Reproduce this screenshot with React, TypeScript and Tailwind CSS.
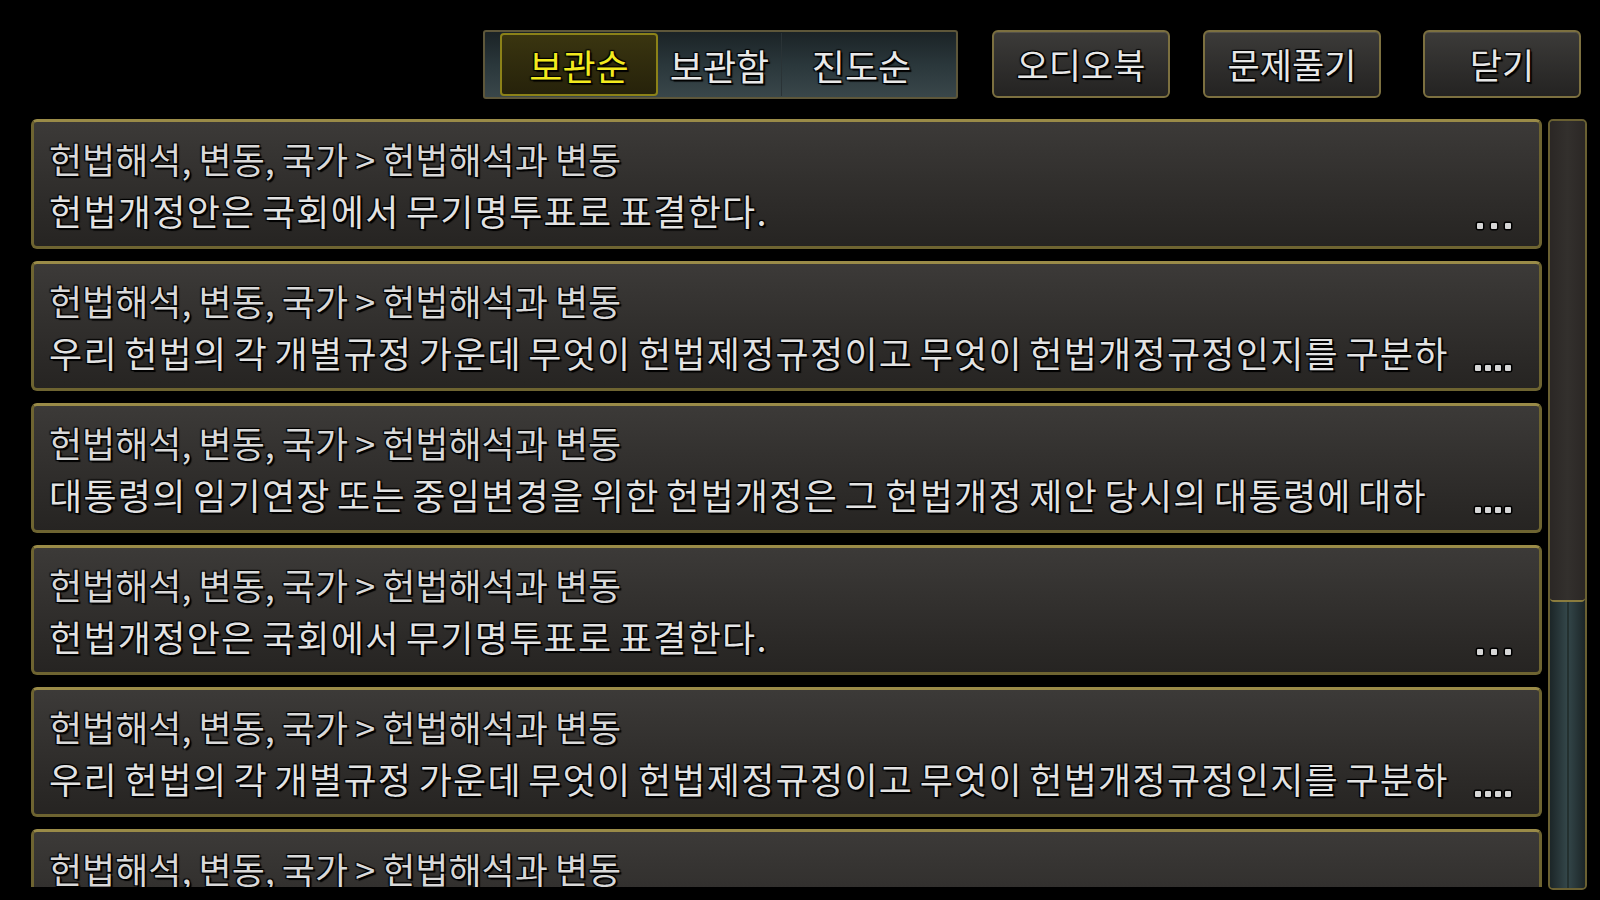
import React from 'react';

const category = '헌법해석, 변동, 국가 > 헌법해석과 변동';

const items = [
  { text: '헌법개정안은 국회에서 무기명투표로 표결한다.', dots: 3 },
  { text: '우리 헌법의 각 개별규정 가운데 무엇이 헌법제정규정이고 무엇이 헌법개정규정인지를 구분하', dots: 4 },
  { text: '대통령의 임기연장 또는 중임변경을 위한 헌법개정은 그 헌법개정 제안 당시의 대통령에 대하', dots: 4 },
  { text: '헌법개정안은 국회에서 무기명투표로 표결한다.', dots: 3 },
  { text: '우리 헌법의 각 개별규정 가운데 무엇이 헌법제정규정이고 무엇이 헌법개정규정인지를 구분하', dots: 4 },
  { text: '', dots: 0 },
];

const shadow = '[text-shadow:2px_2px_1px_#000,-1px_-1px_1px_#000,1px_-1px_1px_#000,-1px_1px_1px_#000]';

const Button = ({ label, width }: { label: string; width: string }) => (
  <button
    className={`${width} h-[68px] rounded-md border-2 border-[#7c7040] bg-gradient-to-b from-[#3c3b39] to-[#242322] shadow-[inset_0_1px_0_#55524a] text-[35px] text-[#e6e6e6] ${shadow}`}
  >
    {label}
  </button>
);

const Dots = ({ count }: { count: number }) => (
  <div className={`flex items-center mb-[10px] ${count === 4 ? 'gap-[4px]' : 'gap-[8px]'}`}>
    {Array.from({ length: count }).map((_, i) => (
      <span
        key={i}
        className="w-[6px] h-[6px] rounded-[1px] bg-[#d6d6d6] shadow-[0_0_0_1.5px_#000]"
      />
    ))}
  </div>
);

const App = () => {
  return (
    <div
      className="w-[1600px] h-[900px] bg-black overflow-hidden"
      style={{ fontFamily: '"Noto Sans CJK KR", "Noto Sans", sans-serif' }}
    >
      {/* Top bar */}
      <div className="flex items-start pt-[30px] pl-[483px] h-[119px]">
        <div className="flex h-[69px] w-[475px] rounded-[3px] border-2 border-[#5e573a] bg-gradient-to-b from-[#1b2326] via-[#2a373b] to-[#3a474a] px-[15px] py-[1px]">
          <div className={`w-[158px] h-full rounded-[4px] border-2 border-[#8c8218] bg-gradient-to-b from-[#3a3510] to-[#26220a] flex items-center justify-center text-[36px] text-[#f2ea1e] ${shadow}`}>
            보관순
          </div>
          <div className={`w-[124px] h-full border-r border-[#2a3336] flex items-center justify-center text-[36px] text-[#e8e8e8] ${shadow}`}>
            보관함
          </div>
          <div className={`flex-1 h-full flex items-center justify-center text-[36px] text-[#e8e8e8] ${shadow}`}>
            진도순
          </div>
        </div>
        <div className="ml-[34px]">
          <Button label="오디오북" width="w-[178px]" />
        </div>
        <div className="ml-[33px]">
          <Button label="문제풀기" width="w-[178px]" />
        </div>
        <div className="ml-[42px]">
          <Button label="닫기" width="w-[158px]" />
        </div>
      </div>

      {/* List */}
      <div className="flex pl-[31px] h-[768px]">
        <div className="w-[1511px] h-full overflow-hidden flex flex-col gap-[12px]">
          {items.map((item, i) => (
            <div
              key={i}
              className="shrink-0 h-[130px] rounded-[6px] border-[3px] border-[#6e6431] border-t-[#9a8b48] bg-gradient-to-b from-[#3c3a38] to-[#262422] pl-[15px] pr-[28px] pt-[13px]"
            >
              <div className={`h-[46px] leading-[46px] text-[36px] [word-spacing:-1px] text-[#d8d8d8] whitespace-nowrap ${shadow}`}>
                {category}
              </div>
              <div className="flex items-end justify-between h-[58px]">
                <div className={`leading-[58px] text-[36px] tracking-[1.3px] [word-spacing:-3px] text-[#e2e2e2] whitespace-nowrap overflow-hidden ${shadow}`}>
                  {item.text}
                </div>
                <Dots count={item.dots} />
              </div>
            </div>
          ))}
        </div>

        {/* Scrollbar */}
        <div className="ml-[6px] w-[39px] h-[771px] flex flex-col rounded-[5px] border-2 border-[#6a6032] bg-[#1a2426] overflow-hidden">
          <div className="h-[481px] shrink-0 rounded-[4px] border-b-2 border-[#8a7c3e] bg-gradient-to-r from-[#2b2725] via-[#33302d] to-[#2b2725]" />
          <div className="flex-1 flex justify-center bg-gradient-to-r from-[#1c2628] via-[#34474a] to-[#1c2628]">
            <div className="w-[2px] bg-[#23302f]" />
          </div>
        </div>
      </div>
    </div>
  );
};

export default App;
